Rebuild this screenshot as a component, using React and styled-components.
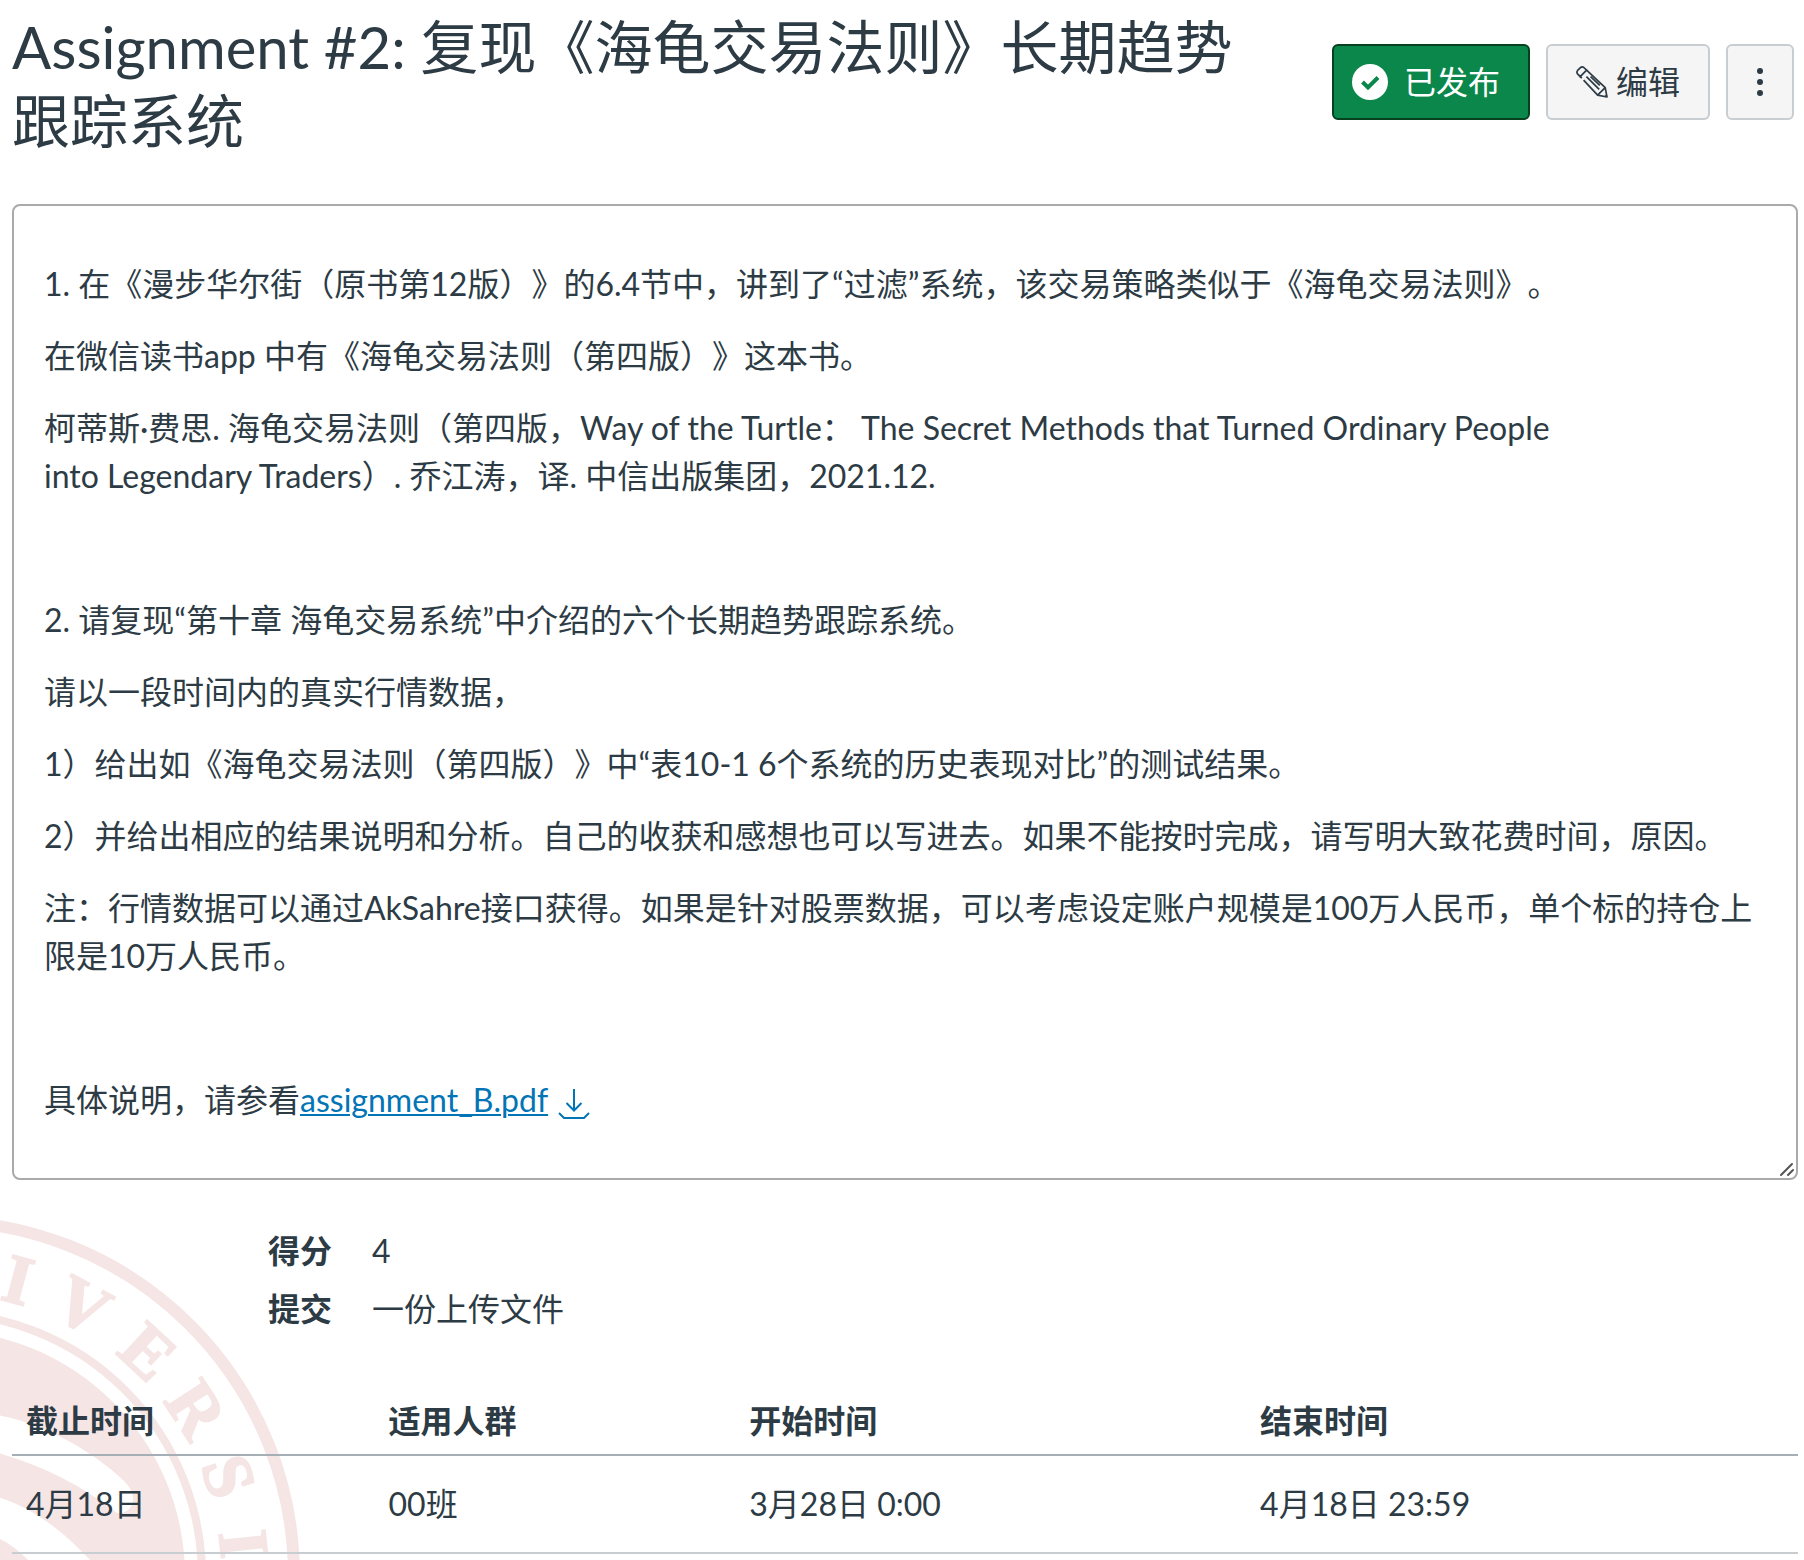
import React from "react";
import styled, { createGlobalStyle } from "styled-components";

const GlobalStyle = createGlobalStyle`
  *, *::before, *::after { box-sizing: border-box; }
  body {
    margin: 0;
    background: #fff;
    color: #2d3b45;
    font-family: Lato, "Noto Sans CJK SC", sans-serif;
    font-size: 32px;
    line-height: 48px;
    text-spacing-trim: space-all;
  }
`;

const Page = styled.main`
  position: relative;
  isolation: isolate;
  min-height: 100vh;
  overflow: hidden;
  padding: 10px 6px 0 12px;
`;

const Watermark = styled.svg`
  position: absolute;
  left: 0;
  bottom: 0;
  z-index: -1;
  width: 300px;
  height: 344px;
  fill: #f5e5e5;
`;

const SealLetter = styled.text`
  font-family: "Liberation Serif", serif;
  font-weight: 700;
  font-size: 70px;
  text-anchor: middle;
  stroke: #f5e5e5;
  stroke-width: 2px;
`;

const Header = styled.header`
  display: flex;
  justify-content: space-between;
  align-items: flex-start;
  gap: 48px;
  padding-right: 4px;
`;

const Title = styled.h1`
  margin: 0;
  font-size: 58px;
  line-height: 74px;
  font-weight: 400;
`;

const Actions = styled.div`
  display: flex;
  flex: none;
  gap: 16px;
  margin-top: 34px;
`;

const Button = styled.button`
  display: flex;
  align-items: center;
  justify-content: center;
  gap: ${(p) => (p.$published ? 16 : 8)}px;
  height: 76px;
  padding: 0 ${(p) => (p.$iconOnly ? 16 : p.$published ? 18 : 28)}px;
  padding-right: ${(p) => (p.$iconOnly ? 16 : 28)}px;
  border: 2px solid ${(p) => (p.$published ? "#06401f" : "#c7cdd1")};
  border-radius: 6px;
  background: ${(p) => (p.$published ? "#0b874b" : "#f5f5f5")};
  color: ${(p) => (p.$published ? "#fff" : "#2d3b45")};
  font: inherit;
  cursor: pointer;

  svg { flex: none; }
`;

const Description = styled.section`
  position: relative;
  margin-top: 46px;
  padding: 30px;
  border: 2px solid #aaa;
  border-radius: 8px;
`;

const Paragraph = styled.p`
  margin: 24px 0;
  min-height: 48px;
`;

const ResizeGrip = styled.svg`
  position: absolute;
  right: 1px;
  bottom: 1px;
`;

const FileLink = styled.a`
  color: #0374b5;
  text-decoration: underline;
  text-decoration-thickness: 2px;
  text-underline-offset: 2px;
`;

const DownloadLink = styled.a`
  display: inline-block;
  margin-left: 10px;
  color: #0374b5;
  vertical-align: middle;

  svg { display: block; }
`;

const Details = styled.dl`
  display: grid;
  grid-template-columns: 320px 1fr;
  gap: 10px 40px;
  margin: 47px 0 0;
`;

const DetailLabel = styled.dt`
  font-weight: 700;
  text-align: right;
`;

const DetailValue = styled.dd`
  margin: 0;
`;

const Dates = styled.table`
  width: 100%;
  margin-top: 52px;
  border-collapse: collapse;
  table-layout: fixed;
`;

const Column = styled.col`
  width: ${(p) => p.$width};
`;

const HeadCell = styled.th`
  padding: 12px 14px 9px;
  border-bottom: 2px solid #a5afb5;
  font-weight: 700;
  text-align: left;
`;

const Cell = styled.td`
  padding: 24px 14px;
  border-bottom: 2px solid #c7cdd1;
`;

const sealLetters = [
  ["I", 15],
  ["V", 28],
  ["E", 43],
  ["R", 57],
  ["S", 71],
  ["I", 84],
];

function Seal() {
  return (
    <Watermark viewBox="0 1216 300 344" aria-hidden="true">
      <g fill="none" stroke="#f5e5e5">
        <circle cx="-61" cy="1576" r="355" strokeWidth="12" />
        <circle cx="-61" cy="1576" r="263" strokeWidth="8" />
      </g>
      <circle cx="-61" cy="1576" r="246" />
      <path
        fill="#fff"
        d="M-2 1415C40 1423 88 1447 123 1480Q134 1490 133 1501Q130 1514 117 1513C84 1487 44 1466 -2 1453Z"
      />
      <path fill="#fff" d="M-2 1497C34 1508 64 1532 92 1562L30 1562Q14 1545 -2 1538Z" />
      {sealLetters.map(([letter, angle]) => (
        <SealLetter
          key={angle}
          x="-61"
          y="1293"
          transform={`rotate(${angle} -61 1576)`}
        >
          {letter}
        </SealLetter>
      ))}
    </Watermark>
  );
}

function CheckIcon() {
  return (
    <svg width="36" height="36" viewBox="0 0 36 36" aria-hidden="true">
      <circle cx="18" cy="18" r="18" fill="#fff" />
      <path d="M10.5 18l5.5 5.5L26 13.5" fill="none" stroke="#0b874b" strokeWidth="4" />
    </svg>
  );
}

function PencilIcon() {
  return (
    <svg
      width="32"
      height="32"
      viewBox="0 0 32 32"
      fill="none"
      stroke="currentColor"
      strokeWidth="1.7"
      strokeLinejoin="round"
      aria-hidden="true"
    >
      <path d="M1.5 7.8Q.2 6 1.8 4.2L4.2 1.8Q6 .2 7.8 1.5L10.6 4.2L4.2 10.6Z" />
      <path d="M10.6 4.2L29.2 21.6L31 31L21.6 29.2L7.6 14.2M4.2 10.6L5.8 12.2M21.6 29.2L29.2 21.6M10.4 10.6L23.2 23.4M14.6 10.6L23.8 19.4" />
      <path d="M27.6 31L31 27.4V31Z" fill="currentColor" stroke="none" />
    </svg>
  );
}

function MoreIcon() {
  return (
    <svg width="32" height="32" viewBox="0 0 32 32" fill="currentColor" aria-hidden="true">
      <circle cx="16" cy="5" r="3" />
      <circle cx="16" cy="16" r="3" />
      <circle cx="16" cy="27" r="3" />
    </svg>
  );
}

function DownloadIcon() {
  return (
    <svg
      width="32"
      height="32"
      viewBox="0 0 32 32"
      fill="none"
      stroke="currentColor"
      strokeWidth="2"
      aria-hidden="true"
    >
      <path d="M16 1V22M8.5 15L16 22.5L23.5 15M1 25L6 30H26L31 25" />
    </svg>
  );
}

export default function App() {
  return (
    <>
      <GlobalStyle />
      <Page>
        <Seal />
        <Header>
          <Title>Assignment #2: 复现《海龟交易法则》长期趋势跟踪系统</Title>
          <Actions>
            <Button type="button" $published>
              <CheckIcon />
              已发布
            </Button>
            <Button type="button">
              <PencilIcon />
              编辑
            </Button>
            <Button type="button" $iconOnly aria-label="更多选项">
              <MoreIcon />
            </Button>
          </Actions>
        </Header>

        <Description>
          <Paragraph>
            1. 在《漫步华尔街（原书第12版）》的6.4节中，讲到了“过滤”系统，该交易策略类似于《海龟交易法则》。
          </Paragraph>
          <Paragraph>在微信读书app 中有《海龟交易法则（第四版）》这本书。</Paragraph>
          <Paragraph>
            柯蒂斯·费思. 海龟交易法则（第四版，Way of the Turtle： The Secret Methods that Turned
            Ordinary People into&nbsp;Legendary&nbsp;Traders）. 乔江涛，译. 中信出版集团，2021.12.
          </Paragraph>
          <Paragraph />
          <Paragraph>2. 请复现“第十章 海龟交易系统”中介绍的六个长期趋势跟踪系统。</Paragraph>
          <Paragraph>请以一段时间内的真实行情数据，</Paragraph>
          <Paragraph>
            1）给出如《海龟交易法则（第四版）》中“表10-1 6个系统的历史表现对比”的测试结果。
          </Paragraph>
          <Paragraph>
            2）并给出相应的结果说明和分析。自己的收获和感想也可以写进去。如果不能按时完成，请写明大致花费时间，原因。
          </Paragraph>
          <Paragraph>
            注：行情数据可以通过AkSahre接口获得。如果是针对股票数据，可以考虑设定账户规模是100万人民币，单个标的持仓上限是10万人民币。
          </Paragraph>
          <Paragraph />
          <Paragraph>
            具体说明，请参看<FileLink href="#file">assignment_B.pdf</FileLink>
            <DownloadLink href="#download" aria-label="下载 assignment_B.pdf">
              <DownloadIcon />
            </DownloadLink>
          </Paragraph>
          <ResizeGrip width="16" height="16" viewBox="0 0 16 16" aria-hidden="true">
            <path
              d="M2 14L13 3M9 14L14 9"
              fill="none"
              stroke="#555"
              strokeWidth="2"
              strokeLinecap="round"
            />
          </ResizeGrip>
        </Description>

        <Details>
          <DetailLabel>得分</DetailLabel>
          <DetailValue>4</DetailValue>
          <DetailLabel>提交</DetailLabel>
          <DetailValue>一份上传文件</DetailValue>
        </Details>

        <Dates>
          <colgroup>
            <Column $width="20.3%" />
            <Column $width="20.2%" />
            <Column $width="28.6%" />
            <Column $width="auto" />
          </colgroup>
          <thead>
            <tr>
              <HeadCell scope="col">截止时间</HeadCell>
              <HeadCell scope="col">适用人群</HeadCell>
              <HeadCell scope="col">开始时间</HeadCell>
              <HeadCell scope="col">结束时间</HeadCell>
            </tr>
          </thead>
          <tbody>
            <tr>
              <Cell>4月18日</Cell>
              <Cell>00班</Cell>
              <Cell>3月28日 0:00</Cell>
              <Cell>4月18日 23:59</Cell>
            </tr>
          </tbody>
        </Dates>
      </Page>
    </>
  );
}
